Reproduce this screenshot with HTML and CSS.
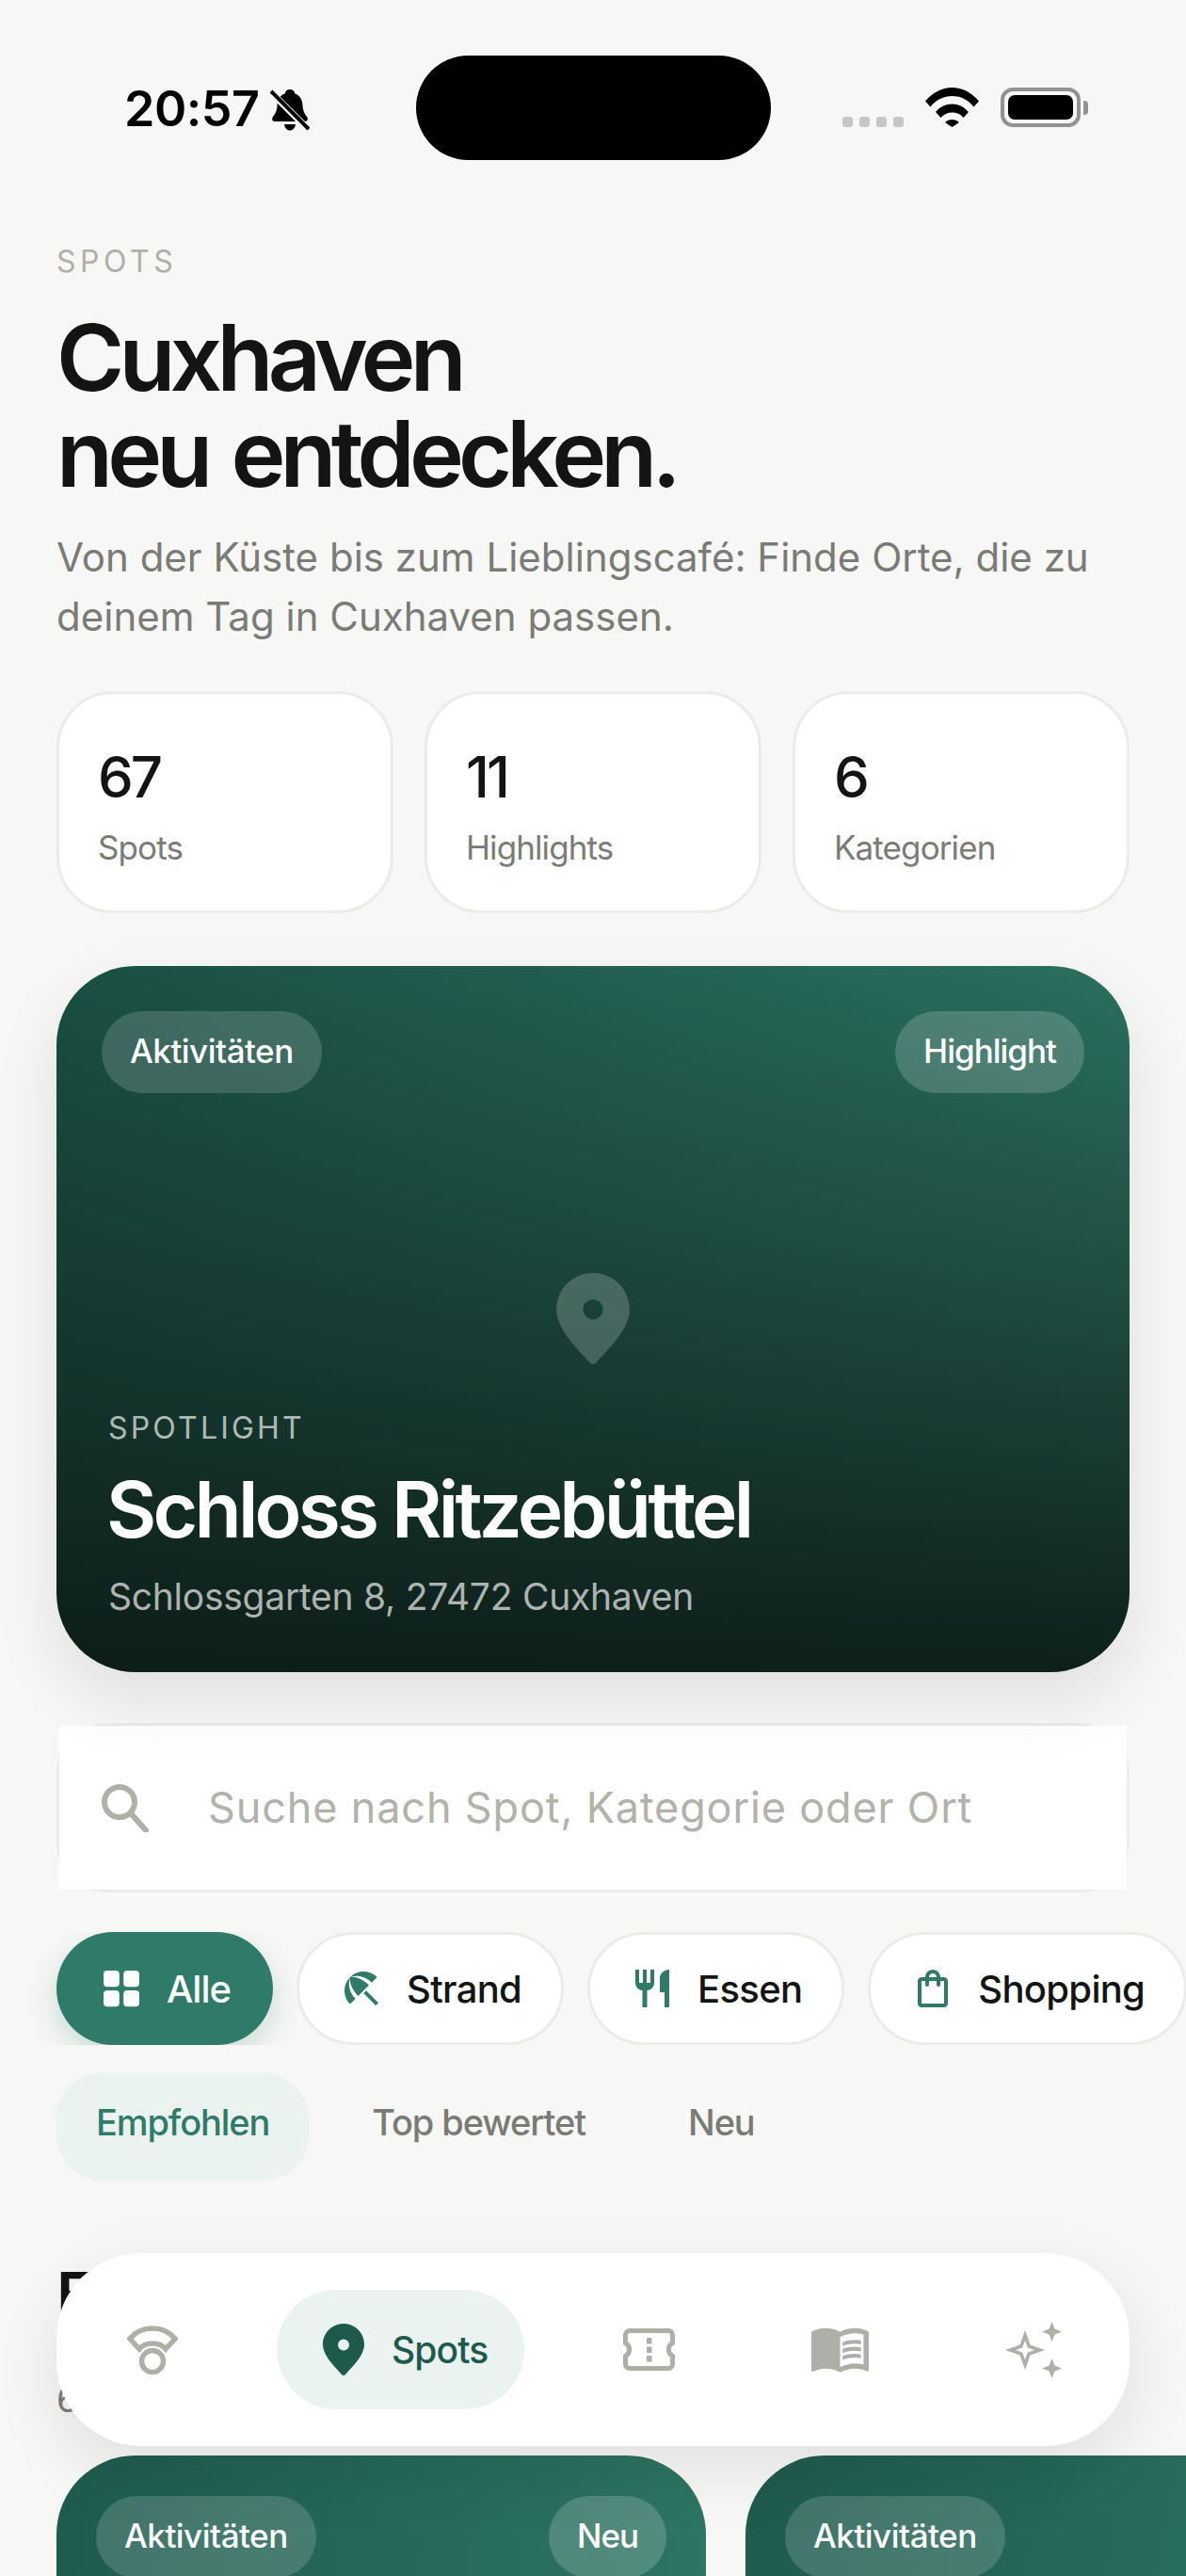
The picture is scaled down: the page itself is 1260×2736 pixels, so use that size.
FILE: index.html
```html
<!DOCTYPE html>
<html lang="de">
<head>
    <meta charset="UTF-8">
    <meta name="viewport" content="width=device-width, initial-scale=1.0">
    <link rel="stylesheet" href="styles.css">
    <title>Spots</title>
</head>
<body>
    <div class="screen">
        <div class="status">
            <div class="status-left">
                <span class="time">20:57</span>
                <svg class="bell" viewBox="0 0 42 45">
                    <path d="M21 1c3 0 5 2 5.500 4.500C32 7.500 34 12 34.500 18c.3 5 1.500 8 4.500 12 1.500 2 1 5-2 5H5c-3 0-3.500-3-2-5 3-4 4.200-7 4.500-12C8 12 10 7.500 15.500 5.500 16 3 18 1 21 1zM15 38h12c-.5 4-3 6.500-6 6.500S15.500 42 15 38z"/>
                    <path class="bell-gap" d="M0 -3L45 42"/>
                    <path class="bell-line" d="M1 3L41 43"/>
                </svg>
            </div>
            <div class="island"></div>
            <div class="status-right">
                <div class="dots"><i></i><i></i><i></i><i></i></div>
                <svg class="wifi" viewBox="0 0 57 42">
                    <path d="M0 14.500C7.500 5.500 17.500 0 28.500 0S49.500 5.500 57 14.500l-5.500 6C45.500 13 37.500 9 28.500 9S11.500 13 5.500 20.500z"/>
                    <path d="M11 26C15.500 20.500 21.500 17.500 28.500 17.500S41.500 20.500 46 26l-5.500 6C37.500 28.500 33.500 26.500 28.500 26.500S19.500 28.500 16.500 32z"/>
                    <path d="M21 37C23 35 25.500 34 28.500 34S34 35 36 37L28.500 42z"/>
                </svg>
                <div class="battery"><div class="battery-fill"></div></div>
                <div class="battery-cap"></div>
            </div>
        </div>

        <div class="content">
            <div class="eyebrow">SPOTS</div>
            <h1 class="title">Cuxhaven<br>neu entdecken.</h1>
            <p class="intro">Von der Küste bis zum Lieblingscafé: Finde Orte, die zu deinem Tag in Cuxhaven passen.</p>

            <div class="stats">
                <div class="stat"><div class="stat-num">67</div><div class="stat-label">Spots</div></div>
                <div class="stat"><div class="stat-num">11</div><div class="stat-label">Highlights</div></div>
                <div class="stat"><div class="stat-num">6</div><div class="stat-label">Kategorien</div></div>
            </div>

            <div class="hero">
                <div class="tag-row">
                    <span class="tag">Aktivitäten</span>
                    <span class="tag tag-light">Highlight</span>
                </div>
                <svg class="hero-pin" viewBox="0 0 44 55">
                    <path fill-rule="evenodd" d="M22 0C9.800 0 0 9.800 0 22c0 12 13 24 20 32 1 1.200 3 1.200 4 0 7-8 20-20 20-32C44 9.800 34.200 0 22 0zm0 16a6 6 0 1 1 0 12 6 6 0 0 1 0-12z"/>
                </svg>
                <div class="hero-eyebrow">SPOTLIGHT</div>
                <div class="hero-title">Schloss Ritzebüttel</div>
                <div class="hero-address">Schlossgarten 8, 27472 Cuxhaven</div>
            </div>

            <div class="search">
                <div class="search-inner">
                    <svg class="search-icon" viewBox="0 0 50 51">
                        <circle cx="19" cy="19" r="16"/>
                        <path d="M31 31L47 49"/>
                    </svg>
                    <span class="search-text">Suche nach Spot, Kategorie oder Ort</span>
                </div>
            </div>

            <div class="chips">
                <div class="chip chip-active">
                    <svg class="chip-icon" viewBox="0 0 24 24">
                        <rect x="2.500" y="2.500" width="8.400" height="8.600" rx="2"/>
                        <rect x="13.100" y="2.500" width="8.400" height="8.600" rx="2"/>
                        <rect x="2.500" y="13" width="8.400" height="8.600" rx="2"/>
                        <rect x="13.100" y="13" width="8.400" height="8.600" rx="2"/>
                    </svg>
                    Alle
                </div>
                <div class="chip">
                    <svg class="chip-icon" viewBox="0 0 24 24">
                        <path d="M13.127 14.560l1.430-1.430 6.440 6.443L19.570 21zm4.293-5.730l2.860-2.860c-3.950-3.950-10.350-3.960-14.300-.02 3.930-1.300 8.310-.25 11.440 2.880zM5.950 5.980c-3.940 3.950-3.930 10.350.02 14.300l2.860-2.860C5.700 14.290 4.650 9.910 5.950 5.980zm.02-.02l-.01.01c-.38 3.010 1.170 6.880 4.300 10.020l5.730-5.730c-3.130-3.130-7.010-4.680-10.020-4.300z"/>
                    </svg>
                    Strand
                </div>
                <div class="chip">
                    <svg class="chip-icon" viewBox="0 0 24 24">
                        <path d="M11 9H9V2H7v7H5V2H3v7c0 2.120 1.660 3.840 3.750 3.970V22h2.500v-9.030C11.340 12.840 13 11.120 13 9V2h-2v7zm5-3v8h2.500v8H21V2c-2.760 0-5 2.240-5 4z"/>
                    </svg>
                    Essen
                </div>
                <div class="chip">
                    <svg class="chip-icon" viewBox="0 0 24 24">
                        <path d="M18 6h-2c0-2.210-1.790-4-4-4S8 3.790 8 6H6c-1.100 0-2 .9-2 2v12c0 1.100.9 2 2 2h12c1.100 0 2-.9 2-2V8c0-1.100-.9-2-2-2zm-6-2c1.100 0 2 .9 2 2h-4c0-1.100.9-2 2-2zm6 16H6V8h2v2c0 .55.45 1 1 1s1-.45 1-1V8h4v2c0 .55.45 1 1 1s1-.45 1-1V8h2v12z"/>
                    </svg>
                    Shopping
                </div>
            </div>

            <div class="sorts">
                <span class="sort sort-active">Empfohlen</span>
                <span class="sort">Top bewertet</span>
                <span class="sort">Neu</span>
            </div>

            <h2 class="section-title">Entdecken</h2>
            <div class="section-sub">67 Spots</div>

            <div class="cards">
                <div class="card">
                    <div class="tag-row">
                        <span class="tag">Aktivitäten</span>
                        <span class="tag tag-light">Neu</span>
                    </div>
                </div>
                <div class="card">
                    <div class="tag-row">
                        <span class="tag">Aktivitäten</span>
                    </div>
                </div>
            </div>
        </div>

        <div class="nav">
            <div class="nav-item">
                <svg class="nav-icon nav-radio" viewBox="0 0 54 52">
                    <path d="M3 14C9 6.500 17.500 3 27 3s18 3.500 24 11L41 25C38 21 33 19 27 19S16 21 13 25z"/>
                    <circle cx="27" cy="38" r="11.500"/>
                </svg>
            </div>
            <div class="nav-item nav-active">
                <svg class="nav-pin" viewBox="0 0 44 55">
                    <path fill-rule="evenodd" d="M22 0C9.800 0 0 9.800 0 22c0 12 13 24 20 32 1 1.200 3 1.200 4 0 7-8 20-20 20-32C44 9.800 34.200 0 22 0zm0 16.500a6 6 0 1 1 0 12 6 6 0 0 1 0-12z"/>
                </svg>
                Spots
            </div>
            <div class="nav-item">
                <svg class="nav-icon nav-ticket" viewBox="0 0 55 45">
                    <path class="ticket-line" d="M7 2.500h41a4.500 4.500 0 0 1 4.500 4.500v8.500a8 8 0 0 0 0 14V38a4.500 4.500 0 0 1-4.500 4.500H7A4.500 4.500 0 0 1 2.500 38v-8.500a8 8 0 0 0 0-14V7A4.500 4.500 0 0 1 7 2.500z"/>
                    <rect class="ticket-dot" x="25" y="10" width="5.500" height="6.500"/>
                    <rect class="ticket-dot" x="25" y="19.500" width="5.500" height="6.500"/>
                    <rect class="ticket-dot" x="25" y="29" width="5.500" height="6.500"/>
                </svg>
            </div>
            <div class="nav-item">
                <svg class="nav-icon nav-book" viewBox="1 4.300 22 17.200">
                    <path d="M21 5c-1.110-.35-2.330-.5-3.500-.5-1.950 0-4.050.4-5.500 1.500-1.450-1.100-3.550-1.500-5.500-1.500S2.450 4.900 1 6v14.650c0 .25.25.5.5.5.1 0 .15-.05.25-.05C3.100 20.450 5.050 20 6.500 20c1.950 0 4.050.4 5.500 1.500 1.350-.85 3.800-1.500 5.500-1.500 1.650 0 3.350.3 4.750 1.050.1.05.15.05.25.05.25 0 .5-.25.5-.5V6c-.6-.45-1.250-.75-2-1zm0 13.500c-1.100-.35-2.300-.5-3.500-.5-1.700 0-4.150.65-5.500 1.500V8c1.350-.85 3.800-1.500 5.500-1.500 1.200 0 2.400.15 3.500.5v11.500z"/>
                    <path d="M17.500 10.500c.88 0 1.730.09 2.500.26V9.240c-.79-.15-1.640-.24-2.500-.24-1.700 0-3.240.29-4.500.83v1.660c1.130-.64 2.700-.99 4.500-.99z"/>
                    <path d="M13 12.490v1.660c1.130-.64 2.700-.99 4.500-.99.88 0 1.730.09 2.500.26V11.900c-.79-.15-1.640-.24-2.500-.24-1.700 0-3.240.3-4.500.83z"/>
                    <path d="M17.500 14.330c-1.700 0-3.240.29-4.500.83v1.660c1.130-.64 2.700-.99 4.500-.99.88 0 1.730.09 2.500.26v-1.520c-.79-.16-1.640-.24-2.500-.24z"/>
                </svg>
            </div>
            <div class="nav-item">
                <svg class="nav-icon nav-spark" viewBox="0 0 60 60">
                    <path fill-rule="evenodd" d="M21 9l5.500 15.500L42 30l-15.500 5.500L21 51l-5.500-15.500L0 30l15.500-5.500zm0 11l-2.700 7.300L11 30l7.300 2.700L21 40l2.700-7.300L31 30l-7.300-2.700z"/>
                    <path d="M49.500 0l3 7.500 7.500 3-7.500 3-3 7.500-3-7.500-7.500-3 7.500-3z"/>
                    <path d="M49.500 39l3 7.500 7.500 3-7.500 3-3 7.500-3-7.500-7.500-3 7.500-3z"/>
                </svg>
            </div>
        </div>
    </div>
</body>
</html>
```

FILE: styles.css
```css
html, body {
    margin: 0;
    padding: 0;
    height: 2736px;
    overflow: hidden;
    background-color: #f7f7f5;
}

.screen {
    position: relative;
    width: 1260px;
    height: 2736px;
    overflow: hidden;
    font-family: "Inter", "Noto Sans", sans-serif;
    color: #141414;
}

/* status bar */
.status {
    display: flex;
    align-items: flex-start;
    padding: 59px 0 0 132px;
    height: 111px;
}

.status-left {
    display: flex;
    align-items: center;
    gap: 12px;
    width: 310px;
    margin-top: 31px;
}

.time {
    font-size: 52px;
    font-weight: 600;
    line-height: 52px;
    color: #000;
    letter-spacing: -0.5px;
}

.bell {
    width: 42px;
    height: 45px;
    fill: #000;
}

.bell-gap {
    stroke: #f7f7f5;
    stroke-width: 7;
    transform: translate(-3px, 3px);
}

.bell-line {
    stroke: #000;
    stroke-width: 4;
}

.island {
    width: 377px;
    height: 111px;
    border-radius: 56px;
    background-color: #000;
}

.status-right {
    display: flex;
    align-items: flex-start;
    margin-left: 76px;
    margin-top: 34px;
}

.dots {
    display: flex;
    gap: 7px;
    margin-top: 31px;
    margin-right: 23px;
}

.dots i {
    display: block;
    width: 11px;
    height: 11px;
    border-radius: 3px;
    background-color: #c6c6c4;
}

.wifi {
    width: 57px;
    height: 42px;
    fill: #000;
    margin-right: 23px;
}

.battery {
    box-sizing: border-box;
    width: 85px;
    height: 42px;
    padding: 4px;
    border: 4px solid #929292;
    border-radius: 13px;
}

.battery-fill {
    height: 100%;
    border-radius: 7px;
    background-color: #000;
}

.battery-cap {
    width: 5px;
    height: 15px;
    margin: 14px 0 0 3px;
    border-radius: 0 4px 4px 0;
    background-color: #929292;
}

/* top text */
.content {
    padding: 0 60px;
}

.eyebrow {
    margin-top: 88px;
    font-size: 32px;
    line-height: 40px;
    letter-spacing: 4.5px;
    color: #b0afa8;
}

.title {
    margin: 31px 0 0;
    font-size: 98px;
    font-weight: 600;
    line-height: 102px;
    letter-spacing: -5.8px;
    word-spacing: 6px;
    color: #141414;
}

.intro {
    margin: 27px 0 0;
    font-size: 42px;
    line-height: 63px;
    color: #7b7b76;
}

/* stat cards */
.stats {
    display: grid;
    grid-template-columns: repeat(3, 1fr);
    gap: 33px;
    margin-top: 48px;
}

.stat {
    box-sizing: border-box;
    height: 236px;
    padding: 52px 41px 0;
    border: 3px solid #ecebe7;
    border-radius: 60px;
    background-color: #fff;
}

.stat-num {
    font-size: 60px;
    font-weight: 500;
    line-height: 72px;
    letter-spacing: -3px;
}

.stat-label {
    margin-top: 17px;
    font-size: 35px;
    line-height: 44px;
    letter-spacing: -0.9px;
    color: #7b7b76;
}

/* spotlight */
.hero {
    position: relative;
    box-sizing: border-box;
    height: 750px;
    margin-top: 56px;
    padding: 48px 48px 0;
    border-radius: 84px;
    background: linear-gradient(180deg, rgba(12, 24, 20, 0) 0%, rgba(12, 24, 20, 0.93) 100%), linear-gradient(110deg, #1a4f43 0%, #2e7866 100%);
    box-shadow: 0 30px 70px rgba(20, 20, 20, 0.1);
}

.tag-row {
    display: flex;
    justify-content: space-between;
}

.tag {
    height: 87px;
    padding: 0 30px;
    border-radius: 44px;
    background-color: rgba(255, 255, 255, 0.16);
    color: #fff;
    font-size: 35px;
    font-weight: 500;
    line-height: 85px;
    letter-spacing: -0.5px;
}

.tag-light {
    background-color: rgba(255, 255, 255, 0.18);
    letter-spacing: -1px;
}

.hero-pin {
    display: block;
    width: 80px;
    height: 97px;
    margin: 191px auto 0;
    fill: rgba(255, 255, 255, 0.2);
}

.hero-eyebrow {
    margin: 48px 0 0 7px;
    font-size: 32px;
    line-height: 40px;
    letter-spacing: 3.2px;
    color: rgba(255, 255, 255, 0.68);
}

.hero-title {
    margin: 17px 0 0 5px;
    font-size: 82px;
    font-weight: 600;
    line-height: 100px;
    letter-spacing: -3.8px;
    color: #fff;
}

.hero-address {
    margin: 17px 0 0 7px;
    font-size: 39px;
    line-height: 50px;
    letter-spacing: -0.25px;
    color: rgba(255, 255, 255, 0.66);
}

/* search */
.search {
    height: 180px;
    box-sizing: border-box;
    margin-top: 54px;
    border: 3px solid #ecebe7;
    border-radius: 54px;
}

.search-inner {
    display: flex;
    align-items: center;
    gap: 63px;
    height: 100%;
    padding-left: 45px;
    background-color: #fff;
}

.search-icon {
    width: 50px;
    height: 51px;
    fill: none;
    stroke: #b0afa8;
    stroke-width: 6;
    stroke-linecap: round;
}

.search-text {
    margin-top: -2px;
    font-size: 45px;
    letter-spacing: 0.85px;
    color: #b2b1aa;
}

/* category chips */
.chips {
    display: flex;
    gap: 25px;
    margin: 42px -60px 0;
    padding: 0 60px;
    overflow: hidden;
}

.chip {
    display: flex;
    flex: none;
    align-items: center;
    gap: 24px;
    box-sizing: border-box;
    height: 120px;
    padding: 0 42px;
    border: 3px solid #ecebe7;
    border-radius: 60px;
    background-color: #fff;
    font-size: 40px;
    font-weight: 500;
    letter-spacing: -0.7px;
    color: #141414;
}

.chip-active {
    padding: 0 45px;
    border: 0;
    background-color: #2f7a68;
    color: #fff;
    letter-spacing: -1px;
    box-shadow: 0 12px 30px rgba(47, 122, 104, 0.22);
}

.chip-icon {
    width: 48px;
    height: 48px;
    fill: #2f7a68;
}

.chip-active .chip-icon {
    fill: #fff;
}

/* sort pills */
.sorts {
    display: flex;
    gap: 25px;
    margin-top: 30px;
}

.sort {
    height: 114px;
    padding: 0 42px;
    font-size: 38px;
    font-weight: 500;
    line-height: 104px;
    letter-spacing: -1.1px;
    color: #7b7b76;
}

.sort-active {
    border-radius: 48px;
    background-color: #eaf3f0;
    color: #2f7a68;
}

/* list, mostly behind the nav */
.section-title {
    margin: 81px 0 0;
    font-size: 66px;
    font-weight: 600;
    line-height: 80px;
    letter-spacing: -2px;
}

.section-sub {
    margin-top: 46px;
    font-size: 38px;
    line-height: 50px;
    color: #7b7b76;
}

.cards {
    display: flex;
    gap: 42px;
    margin: 35px -60px 0 0;
}

.card {
    flex: none;
    box-sizing: border-box;
    width: 690px;
    height: 520px;
    padding: 43px 42px 0;
    border-radius: 84px;
    background: linear-gradient(100deg, #1f5a4d 0%, #2e7866 100%);
}

/* floating nav */
.nav {
    position: absolute;
    left: 60px;
    right: 60px;
    top: 2393px;
    display: flex;
    align-items: center;
    gap: 65px;
    box-sizing: border-box;
    height: 205px;
    padding: 0 32px 0 35px;
    border-radius: 90px;
    background-color: #fff;
    box-shadow: 0 24px 70px rgba(20, 20, 20, 0.1);
}

.nav-item {
    display: flex;
    flex: none;
    align-items: center;
    padding: 0 40px;
}

.nav-icon {
    display: block;
    fill: #afaea7;
}

.nav-radio {
    width: 54px;
    height: 52px;
    fill: none;
    stroke: #afaea7;
    stroke-width: 5.5;
}

.nav-ticket {
    width: 55px;
    height: 45px;
}

.ticket-line {
    fill: none;
    stroke: #afaea7;
    stroke-width: 5;
}

.nav-book {
    width: 61px;
    height: 48px;
}

.nav-spark {
    width: 60px;
    height: 60px;
}

.nav-active {
    gap: 29px;
    height: 127px;
    padding: 0 39px 0 49px;
    border-radius: 64px;
    background-color: #eaf3f0;
    font-size: 39px;
    font-weight: 500;
    letter-spacing: -0.9px;
    color: #1d5a4c;
}

.nav-pin {
    width: 44px;
    height: 55px;
    fill: #1d5a4c;
}
```
